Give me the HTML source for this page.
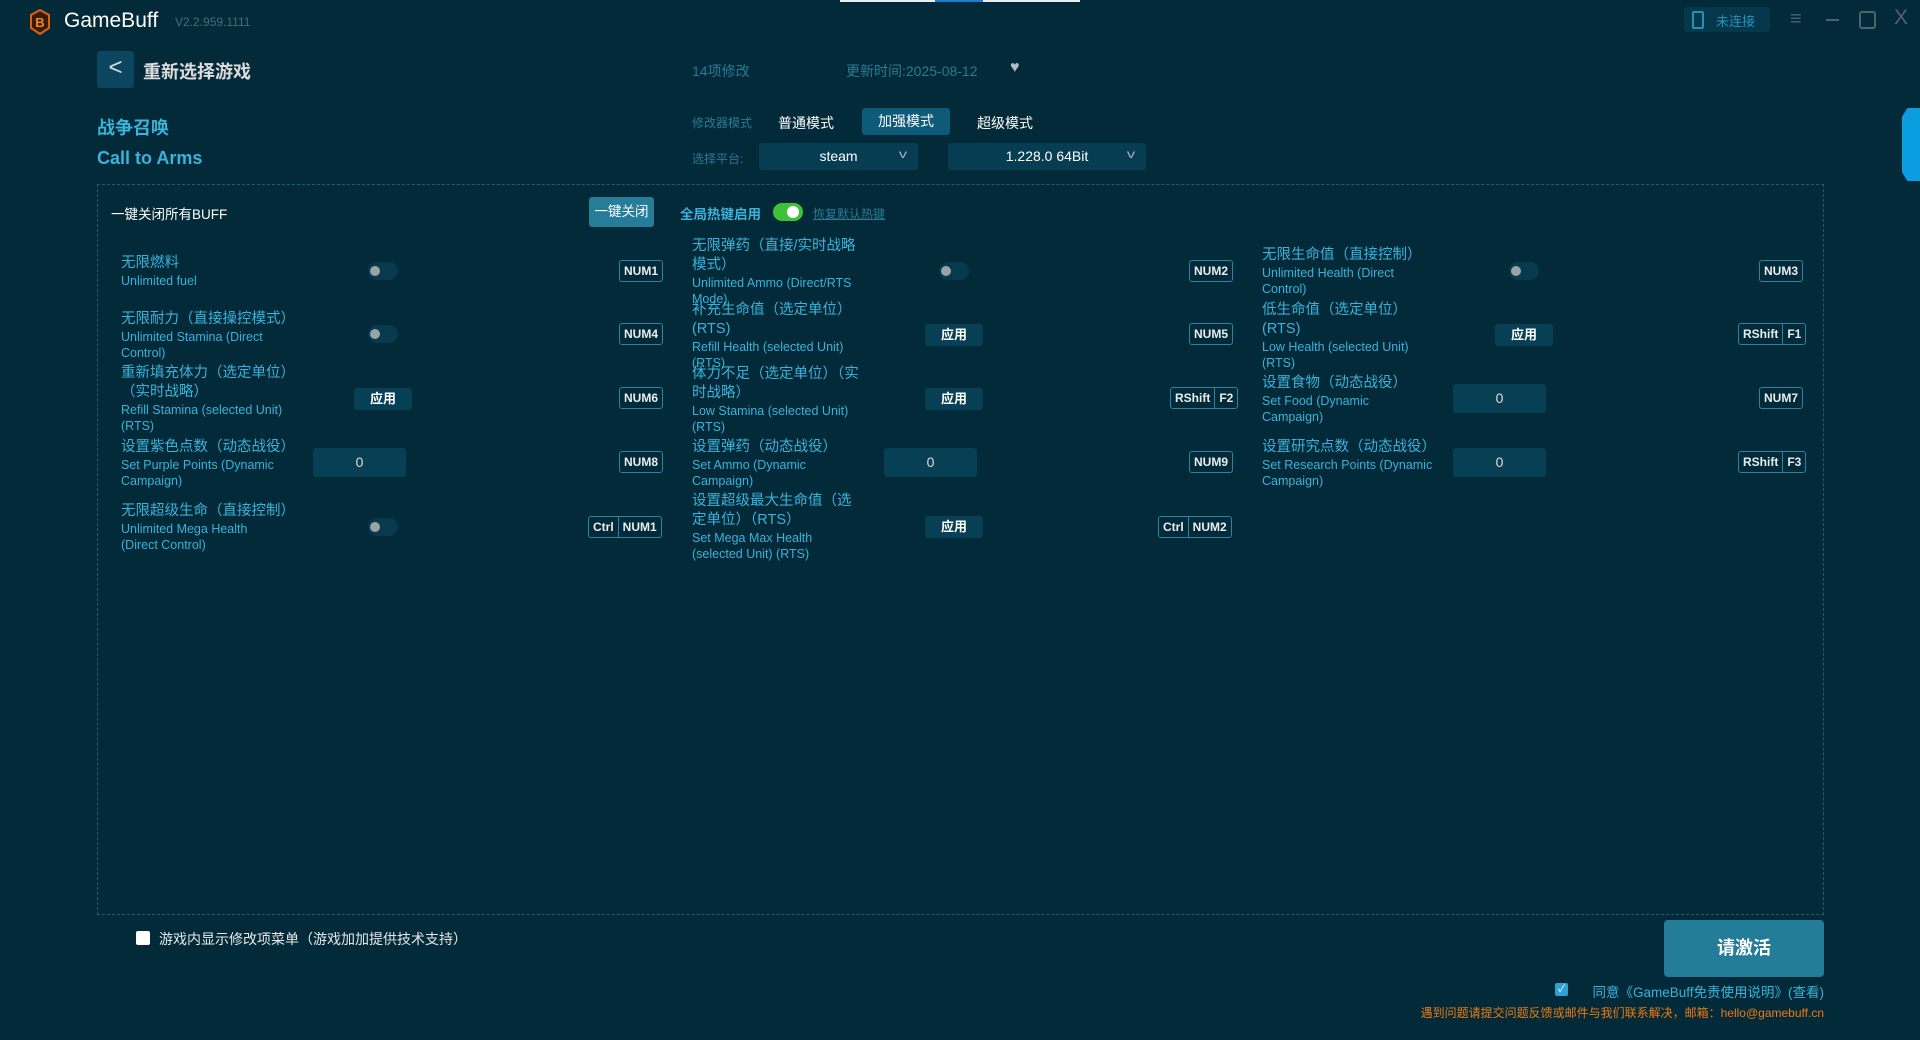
<!DOCTYPE html>
<html><head><meta charset="utf-8"><style>
*{margin:0;padding:0;box-sizing:border-box}
body{width:1920px;height:1040px;background:#022a39;font-family:"Liberation Sans","Noto Sans CJK SC",sans-serif;color:#fff;position:relative;overflow:hidden}
.a{position:absolute;white-space:nowrap}
.lbl{position:absolute;width:172px;white-space:normal;color:#3ab3da}
.lbl .c{font-size:14.5px;line-height:19px}
.lbl .e{font-size:12.5px;line-height:16px}
.tg{position:absolute;width:30px;height:18px;border-radius:9px;background:#073a4c}
.tg:before{content:"";position:absolute;left:2px;top:4px;width:10px;height:10px;border-radius:50%;background:#9aa3a8}
.ap{position:absolute;width:58px;height:22px;background:#073f54;border-radius:3px;font-size:13px;font-weight:bold;text-align:center;line-height:22px}
.in{position:absolute;width:93px;height:29px;background:#073f54;border-radius:3px;font-size:14px;text-align:center;line-height:29px;color:#ddd}
.hk{position:absolute;height:22px;border:1px solid #2a85a5;border-radius:3px;font-size:12px;font-weight:bold;line-height:20px;display:flex;color:#e8eef0}
.hk span{padding:0 4px}
.hk span+span{border-left:1px solid #2a85a5}
.dd{position:absolute;height:27px;background:#063d52;border-radius:3px;font-size:14px;text-align:center;line-height:27px}
.dd i{position:absolute;right:12px;top:-2px;font-style:normal;color:#aac;font-size:12px;transform:scaleX(1.4)}
</style></head><body>
<div class="a" style="left:840px;top:0;width:240px;height:2px;background:#e8eef2"></div>
<div class="a" style="left:935px;top:0;width:48px;height:2px;background:#1a7fd0"></div>
<svg class="a" style="left:28px;top:8px" width="24" height="28" viewBox="0 0 24 28"><path d="M12 2 L21 7 L21 20 L12 26 L3 20 L3 7Z" fill="#3a1a08" stroke="#e0601a" stroke-width="2"/><text x="12" y="19" font-size="13" font-weight="bold" fill="#f08a20" text-anchor="middle" font-family="Liberation Sans">B</text></svg>
<div class="a" style="left:64px;top:9px;font-size:21px">GameBuff</div>
<div class="a" style="left:175px;top:15px;font-size:12px;color:#3f6f80">V2.2.959.1111</div>
<div class="a" style="left:1684px;top:7px;width:86px;height:25px;background:#06384b;border-radius:3px"></div>
<div class="a" style="left:1692px;top:11px;width:12px;height:18px;border:2px solid #2a8fb5;border-radius:2px"></div>
<div class="a" style="left:1716px;top:11px;font-size:13px;color:#2a8fb5">未连接</div>
<div class="a" style="left:1790px;top:8px;font-size:20px;color:#4a6470">≡</div>
<div class="a" style="left:1826px;top:19px;width:13px;height:2px;background:#4a6470"></div>
<div class="a" style="left:1859px;top:11px;width:17px;height:18px;border:2px solid #4a6470;border-radius:3px"></div>
<div class="a" style="left:1894px;top:6px;font-size:21px;color:#4a6470">X</div>
<div class="a" style="left:1902px;top:108px;width:18px;height:73px;background:#0a9de0;clip-path:polygon(30% 0,100% 0,100% 100%,30% 100%,0 88%,0 12%)"></div>
<div class="a" style="left:97px;top:51px;width:37px;height:37px;background:#0b4660;border-radius:3px;font-size:24px;text-align:center;line-height:34px;color:#ddd">&lt;</div>
<div class="a" style="left:143px;top:58px;font-size:18px;font-weight:bold;color:#ddd">重新选择游戏</div>
<div class="a" style="left:692px;top:61px;font-size:14px;color:#2b7a96">14项修改</div>
<div class="a" style="left:846px;top:61px;font-size:14px;color:#2b7a96">更新时间:2025-08-12</div>
<div class="a" style="left:1010px;top:59px;font-size:16px;color:#b5bcc0">♥</div>
<div class="a" style="left:97px;top:114px;font-size:18px;font-weight:bold;color:#3ab3da">战争召唤</div>
<div class="a" style="left:97px;top:148px;font-size:18px;font-weight:bold;color:#3ab3da">Call to Arms</div>
<div class="a" style="left:692px;top:114px;font-size:12px;color:#2b7a96">修改器模式</div>
<div class="a" style="left:778px;top:113px;font-size:14px">普通模式</div>
<div class="a" style="left:862px;top:108px;width:88px;height:27px;background:#0d5b78;border-radius:3px;font-size:14px;text-align:center;line-height:27px">加强模式</div>
<div class="a" style="left:977px;top:113px;font-size:14px">超级模式</div>
<div class="a" style="left:692px;top:150px;font-size:12px;color:#2b7a96">选择平台:</div>
<div class="dd" style="left:759px;top:143px;width:159px">steam<i>v</i></div>
<div class="dd" style="left:948px;top:143px;width:198px">1.228.0 64Bit<i>v</i></div>
<div class="a" style="left:97px;top:184px;width:1727px;height:731px;border:1px dashed #1e5d72"></div>
<div class="a" style="left:111px;top:203px;font-size:13.5px">一键关闭所有BUFF</div>
<div class="a" style="left:589px;top:197px;width:65px;height:30px;background:#257d9a;border-radius:3px;font-size:13.5px;text-align:center;line-height:30px">一键关闭</div>
<div class="a" style="left:680px;top:203px;font-size:13.5px;font-weight:bold;color:#3ab3da">全局热键启用</div>
<div class="a" style="left:773px;top:203px;width:30px;height:18px;border-radius:9px;background:#3dc23a"></div>
<div class="a" style="left:787px;top:206px;width:12px;height:12px;border-radius:50%;background:#fff"></div>
<div class="a" style="left:813px;top:205px;font-size:12px;color:#2b7a96;text-decoration:underline">恢复默认热键</div>

<div class="lbl" style="left:121px;top:254px"><div class="c">无限燃料</div><div class="e">Unlimited fuel</div></div>
<div class="tg" style="left:368px;top:262px"></div>
<div class="hk" style="left:619px;top:260px"><span>NUM1</span></div>

<div class="lbl" style="left:121px;top:310px"><div class="c">无限耐力（直接操控模式）</div><div class="e">Unlimited Stamina (Direct Control)</div></div>
<div class="tg" style="left:368px;top:325px"></div>
<div class="hk" style="left:619px;top:323px"><span>NUM4</span></div>

<div class="lbl" style="left:121px;top:364px"><div class="c">重新填充体力（选定单位）（实时战略）</div><div class="e">Refill Stamina (selected Unit) (RTS)</div></div>
<div class="ap" style="left:354px;top:388px">应用</div>
<div class="hk" style="left:619px;top:387px"><span>NUM6</span></div>

<div class="lbl" style="left:121px;top:438px"><div class="c">设置紫色点数（动态战役）</div><div class="e">Set Purple Points (Dynamic<br>Campaign)</div></div>
<div class="in" style="left:313px;top:448px">0</div>
<div class="hk" style="left:619px;top:451px"><span>NUM8</span></div>

<div class="lbl" style="left:121px;top:502px"><div class="c">无限超级生命（直接控制）</div><div class="e">Unlimited Mega Health<br>(Direct Control)</div></div>
<div class="tg" style="left:368px;top:518px"></div>
<div class="hk" style="left:588px;top:516px"><span>Ctrl</span><span>NUM1</span></div>

<div class="lbl" style="left:692px;top:237px"><div class="c">无限弹药（直接/实时战略模式）</div><div class="e">Unlimited Ammo (Direct/RTS Mode)</div></div>
<div class="tg" style="left:939px;top:262px"></div>
<div class="hk" style="left:1189px;top:260px"><span>NUM2</span></div>

<div class="lbl" style="left:692px;top:301px"><div class="c">补充生命值（选定单位）(RTS)</div><div class="e">Refill Health (selected Unit) (RTS)</div></div>
<div class="ap" style="left:925px;top:324px">应用</div>
<div class="hk" style="left:1189px;top:323px"><span>NUM5</span></div>

<div class="lbl" style="left:692px;top:365px"><div class="c">体力不足（选定单位）（实时战略）</div><div class="e">Low Stamina (selected Unit) (RTS)</div></div>
<div class="ap" style="left:925px;top:388px">应用</div>
<div class="hk" style="left:1170px;top:387px"><span>RShift</span><span>F2</span></div>

<div class="lbl" style="left:692px;top:438px"><div class="c">设置弹药（动态战役）</div><div class="e">Set Ammo (Dynamic<br>Campaign)</div></div>
<div class="in" style="left:884px;top:448px">0</div>
<div class="hk" style="left:1189px;top:451px"><span>NUM9</span></div>

<div class="lbl" style="left:692px;top:492px"><div class="c">设置超级最大生命值（选定单位）（RTS）</div><div class="e">Set Mega Max Health<br>(selected Unit) (RTS)</div></div>
<div class="ap" style="left:925px;top:516px">应用</div>
<div class="hk" style="left:1158px;top:516px"><span>Ctrl</span><span>NUM2</span></div>

<div class="lbl" style="left:1262px;top:246px"><div class="c">无限生命值（直接控制）</div><div class="e">Unlimited Health (Direct Control)</div></div>
<div class="tg" style="left:1509px;top:262px"></div>
<div class="hk" style="left:1759px;top:260px"><span>NUM3</span></div>

<div class="lbl" style="left:1262px;top:301px"><div class="c">低生命值（选定单位）(RTS)</div><div class="e">Low Health (selected Unit) (RTS)</div></div>
<div class="ap" style="left:1495px;top:324px">应用</div>
<div class="hk" style="left:1738px;top:323px"><span>RShift</span><span>F1</span></div>

<div class="lbl" style="left:1262px;top:374px"><div class="c">设置食物（动态战役）</div><div class="e">Set Food (Dynamic<br>Campaign)</div></div>
<div class="in" style="left:1453px;top:384px">0</div>
<div class="hk" style="left:1759px;top:387px"><span>NUM7</span></div>

<div class="lbl" style="left:1262px;top:438px"><div class="c">设置研究点数（动态战役）</div><div class="e">Set Research Points (Dynamic<br>Campaign)</div></div>
<div class="in" style="left:1453px;top:448px">0</div>
<div class="hk" style="left:1738px;top:451px"><span>RShift</span><span>F3</span></div>

<div class="a" style="left:136px;top:931px;width:14px;height:14px;background:#fff;border-radius:2px"></div>
<div class="a" style="left:159px;top:929px;font-size:14px;color:#e8e8e8">游戏内显示修改项菜单（游戏加加提供技术支持）</div>
<div class="a" style="left:1664px;top:920px;width:160px;height:57px;background:#237d99;border-radius:4px;font-size:18px;font-weight:bold;text-align:center;line-height:57px">请激活</div>
<div class="a" style="left:1555px;top:983px;width:13px;height:13px;background:#2fa3cf;border-radius:2px;font-size:10px;text-align:center;line-height:13px">✓</div>
<div class="a" style="right:96px;top:981px;font-size:13.5px;color:#3ab3da">同意《GameBuff免责使用说明》(查看)</div>
<div class="a" style="right:96px;top:1004px;font-size:12px;color:#f07a10">遇到问题请提交问题反馈或邮件与我们联系解决，邮箱：hello@gamebuff.cn</div>
</body></html>
